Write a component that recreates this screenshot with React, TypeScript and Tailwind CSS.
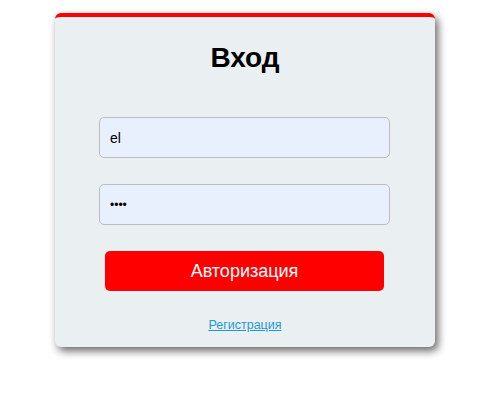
export default function App() {
  return (
    <div className="min-h-screen bg-white pt-[13px] pl-[55px] font-['Liberation_Sans',Arial,sans-serif]">
      <div className="w-[380px] rounded-[6px] border-t-4 border-[#ff0000] bg-[#eaeff2] pb-[14px] shadow-[3px_4px_8px_rgba(0,0,0,0.6)]">
        <h1 className="pt-[25px] text-center text-[28px] leading-[32px] font-bold text-black">Вход</h1>

        <form className="flex flex-col items-start" onSubmit={(e) => e.preventDefault()}>
          <input
            type="text"
            defaultValue="el"
            className="mt-[43px] ml-[44px] h-[41px] w-[291px] rounded-[5px] border border-[#bdbdbd] bg-[#e8f0fe] px-[10px] text-[14px] text-black outline-none"
          />
          <input
            type="password"
            defaultValue="1234"
            className="mt-[26px] ml-[44px] h-[41px] w-[291px] rounded-[5px] border border-[#bdbdbd] bg-[#e8f0fe] px-[10px] text-[12px] text-black outline-none"
          />
          <button
            type="submit"
            className="mt-[26px] ml-[50px] h-[40px] w-[279px] rounded-[5px] bg-[#ff0000] text-[18px] text-white"
          >
            Авторизация
          </button>
          <a href="#" className="mt-[26px] self-center text-[12.5px] leading-[16px] text-[#1a9ad9] underline">
            Регистрация
          </a>
        </form>
      </div>
    </div>
  );
}
